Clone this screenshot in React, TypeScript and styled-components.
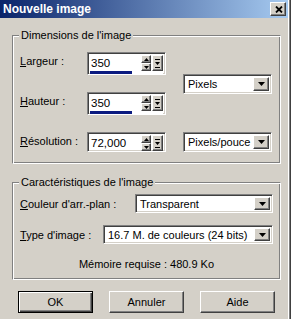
import styled, { createGlobalStyle } from 'styled-components';

const GlobalStyle = createGlobalStyle`
  html, body {
    margin: 0;
    padding: 0;
    background: #d4d0c8;
  }
  body {
    font-family: "Liberation Sans", Arial, sans-serif;
    font-size: 11px;
    color: #000;
  }
`;

// raised / sunken bevels, classic look
const raised = `
  border: 1px solid;
  border-color: #fff #404040 #404040 #fff;
  box-shadow: inset -1px -1px #808080, inset 1px 1px #d4d0c8;
  background: #d4d0c8;
`;

const sunken = `
  border: 1px solid;
  border-color: #808080 #fff #fff #808080;
  box-shadow: inset 1px 1px #404040, inset -1px -1px #d4d0c8;
  background: #fff;
`;

const DownArrow = () => (
  <svg width="7" height="4" viewBox="0 0 7 4">
    <path d="M0 0h7L3.5 4z" fill="#000" />
  </svg>
);

const SpinArrow = ({ up }: { up?: boolean }) => (
  <svg width="5" height="3" viewBox="0 0 5 3">
    <path d={up ? 'M0 3h5L2.5 0z' : 'M0 0h5L2.5 3z'} fill="#000" />
  </svg>
);

const MenuArrow = () => (
  <svg width="5" height="9" viewBox="0 0 5 9">
    <path d="M0 0h5v1H0z M0 3h5L2.5 6z M0 8h5v1H0z" fill="#000" />
  </svg>
);

const CloseGlyph = () => (
  <svg width="8" height="7" viewBox="0 0 8 7">
    <path d="M1 0.5L7 6.5M7 0.5L1 6.5" stroke="#000" strokeWidth="1.8" />
  </svg>
);

const Spin = ({ value, bar }: { value: string; bar?: number }) => (
  <SpinBox $bar={bar !== undefined}>
    <EditRow>
      <Value>{value}</Value>
      <SpinColumn>
        <SpinButton>
          <SpinArrow up />
        </SpinButton>
        <SpinButton>
          <SpinArrow />
        </SpinButton>
      </SpinColumn>
      <MenuButton>
        <MenuArrow />
      </MenuButton>
    </EditRow>
    {bar !== undefined && (
      <Track>
        <Fill style={{ width: `${bar}%` }} />
      </Track>
    )}
  </SpinBox>
);

const Combo = ({ text, width, height = 20 }: { text: string; width: number; height?: number }) => (
  <ComboBox $width={width} $height={height}>
    <ComboText>{text}</ComboText>
    <ComboButton>
      <DownArrow />
    </ComboButton>
  </ComboBox>
);

const App = () => {
  return (
    <>
      <GlobalStyle />
      <Window>
        <TitleBar>
          <Title>Nouvelle image</Title>
          <CloseButton>
            <CloseGlyph />
          </CloseButton>
        </TitleBar>
        <Body>
          <Group $height={129} $padTop={16}>
            <Caption>Dimensions de l'image</Caption>
            <DimGrid>
              <Label $row={1}>
                <u>L</u>argeur :
              </Label>
              <Cell $row={1}>
                <Spin value="350" bar={57} />
              </Cell>
              <ComboCell $row="1 / span 2">
                <Combo text="Pixels" width={89} />
              </ComboCell>
              <Label $row={2}>
                <u>H</u>auteur :
              </Label>
              <Cell $row={2}>
                <Spin value="350" bar={57} />
              </Cell>
              <Label $row={3}>
                <u>R</u>ésolution :
              </Label>
              <Cell $row={3}>
                <Spin value="72,000" />
              </Cell>
              <ComboCell $row={3}>
                <Combo text="Pixels/pouce" width={89} />
              </ComboCell>
            </DimGrid>
          </Group>

          <Group $height={98} $padTop={11} $gapTop={18}>
            <Caption>Caractéristiques de l'image</Caption>
            <Row>
              <RowLabel>
                <u>C</u>ouleur d'arr.-plan :
              </RowLabel>
              <Combo text="Transparent" width={138} height={19} />
            </Row>
            <Row $gapTop={12}>
              <RowLabel>
                <u>T</u>ype d'image :
              </RowLabel>
              <Combo text="16.7 M. de couleurs (24 bits)" width={170} height={19} />
            </Row>
            <Memory>Mémoire requise : 480.9 Ko</Memory>
          </Group>

          <Buttons>
            <Button $default>OK</Button>
            <Button>Annuler</Button>
            <Button>Aide</Button>
          </Buttons>
        </Body>
      </Window>
    </>
  );
};

const Window = styled.div`
  width: 291px;
  height: 319px;
  box-sizing: border-box;
  padding: 0 3px 0 0;
  background: #d4d0c8;
  box-shadow: inset -1px 0 #404040, inset -2px 0 #808080, inset -3px 0 #fff;
  display: flex;
  flex-direction: column;
`;

const TitleBar = styled.div`
  height: 18px;
  display: flex;
  align-items: center;
  justify-content: space-between;
  padding: 0 2px 0 3px;
  background: linear-gradient(to right, #0a246a, #a6caf0);
`;

const Title = styled.span`
  color: #fff;
  font-weight: bold;
  font-size: 12px;
`;

const CloseButton = styled.div`
  ${raised}
  width: 16px;
  height: 14px;
  box-sizing: border-box;
  display: flex;
  align-items: center;
  justify-content: center;
  padding-left: 1px;
`;

const Body = styled.div`
  display: flex;
  flex-direction: column;
  padding: 17px 7px 0 12px;
`;

const Group = styled.div<{ $height: number; $padTop: number; $gapTop?: number }>`
  position: relative;
  height: ${({ $height }) => $height}px;
  box-sizing: border-box;
  margin-top: ${({ $gapTop }) => $gapTop ?? 0}px;
  padding: ${({ $padTop }) => $padTop}px 7px 0 7px;
  border: 1px solid;
  border-color: #808080 #fff #fff #808080;
  box-shadow: inset 1px 1px #fff, inset -1px -1px #808080;
  display: flex;
  flex-direction: column;
`;

const Caption = styled.span`
  position: absolute;
  top: -7px;
  left: 6px;
  padding: 0 2px;
  line-height: 13px;
  background: #d4d0c8;
`;

const DimGrid = styled.div`
  display: grid;
  grid-template-columns: 67px 79px 17px 89px;
  grid-template-rows: 23px 23px 20px;
  row-gap: 17px;
`;

const Label = styled.div<{ $row: number }>`
  grid-column: 1;
  grid-row: ${({ $row }) => $row};
  line-height: 19px;
`;

const Cell = styled.div<{ $row: number }>`
  grid-column: 2;
  grid-row: ${({ $row }) => $row};
`;

const ComboCell = styled.div<{ $row: number | string }>`
  grid-column: 4;
  grid-row: ${({ $row }) => $row};
  align-self: center;
`;

const SpinBox = styled.div<{ $bar: boolean }>`
  ${sunken}
  width: 79px;
  height: ${({ $bar }) => ($bar ? 23 : 20)}px;
  box-sizing: border-box;
  padding: 2px 2px 0 2px;
  display: flex;
  flex-direction: column;
`;

const EditRow = styled.div`
  display: flex;
  align-items: center;
  height: 16px;
`;

const Value = styled.span`
  flex: 1;
  padding-left: 1px;
  font-size: 11.5px;
`;

const SpinColumn = styled.div`
  display: flex;
  flex-direction: column;
  width: 10px;
  height: 16px;
`;

const SpinButton = styled.div`
  ${raised}
  height: 8px;
  box-sizing: border-box;
  display: flex;
  align-items: center;
  justify-content: center;
`;

const MenuButton = styled.div`
  ${raised}
  width: 11px;
  height: 16px;
  margin-left: 1px;
  box-sizing: border-box;
  display: flex;
  align-items: center;
  justify-content: center;
`;

const Track = styled.div`
  height: 3px;
  background: #fff;
`;

const Fill = styled.div`
  height: 3px;
  background: #0a1a80;
`;

const ComboBox = styled.div<{ $width: number; $height: number }>`
  ${sunken}
  width: ${({ $width }) => $width}px;
  height: ${({ $height }) => $height}px;
  box-sizing: border-box;
  padding: 2px;
  display: flex;
  align-items: center;
`;

const ComboText = styled.span`
  flex: 1;
  padding-left: 2px;
  white-space: nowrap;
  overflow: hidden;
`;

const ComboButton = styled.div`
  ${raised}
  width: 16px;
  height: 100%;
  box-sizing: border-box;
  display: flex;
  align-items: center;
  justify-content: center;
`;

const Row = styled.div<{ $gapTop?: number }>`
  display: flex;
  align-items: center;
  justify-content: space-between;
  margin-top: ${({ $gapTop }) => $gapTop ?? 0}px;
`;

const RowLabel = styled.span`
  white-space: nowrap;
`;

const Memory = styled.div`
  margin-top: 14px;
  line-height: 13px;
  text-align: center;
`;

const Buttons = styled.div`
  display: flex;
  justify-content: center;
  gap: 16px;
  margin-top: 11px;
`;

const Button = styled.div<{ $default?: boolean }>`
  width: 75px;
  height: 22px;
  box-sizing: border-box;
  display: flex;
  align-items: center;
  justify-content: center;
  background: #d4d0c8;
  border: 1px solid;
  border-color: ${({ $default }) => ($default ? '#000' : '#fff #404040 #404040 #fff')};
  box-shadow: ${({ $default }) =>
    $default
      ? 'inset 1px 1px #fff, inset -1px -1px #404040, inset -2px -2px #808080'
      : 'inset -1px -1px #808080, inset 1px 1px #d4d0c8'};
`;

export default App;
